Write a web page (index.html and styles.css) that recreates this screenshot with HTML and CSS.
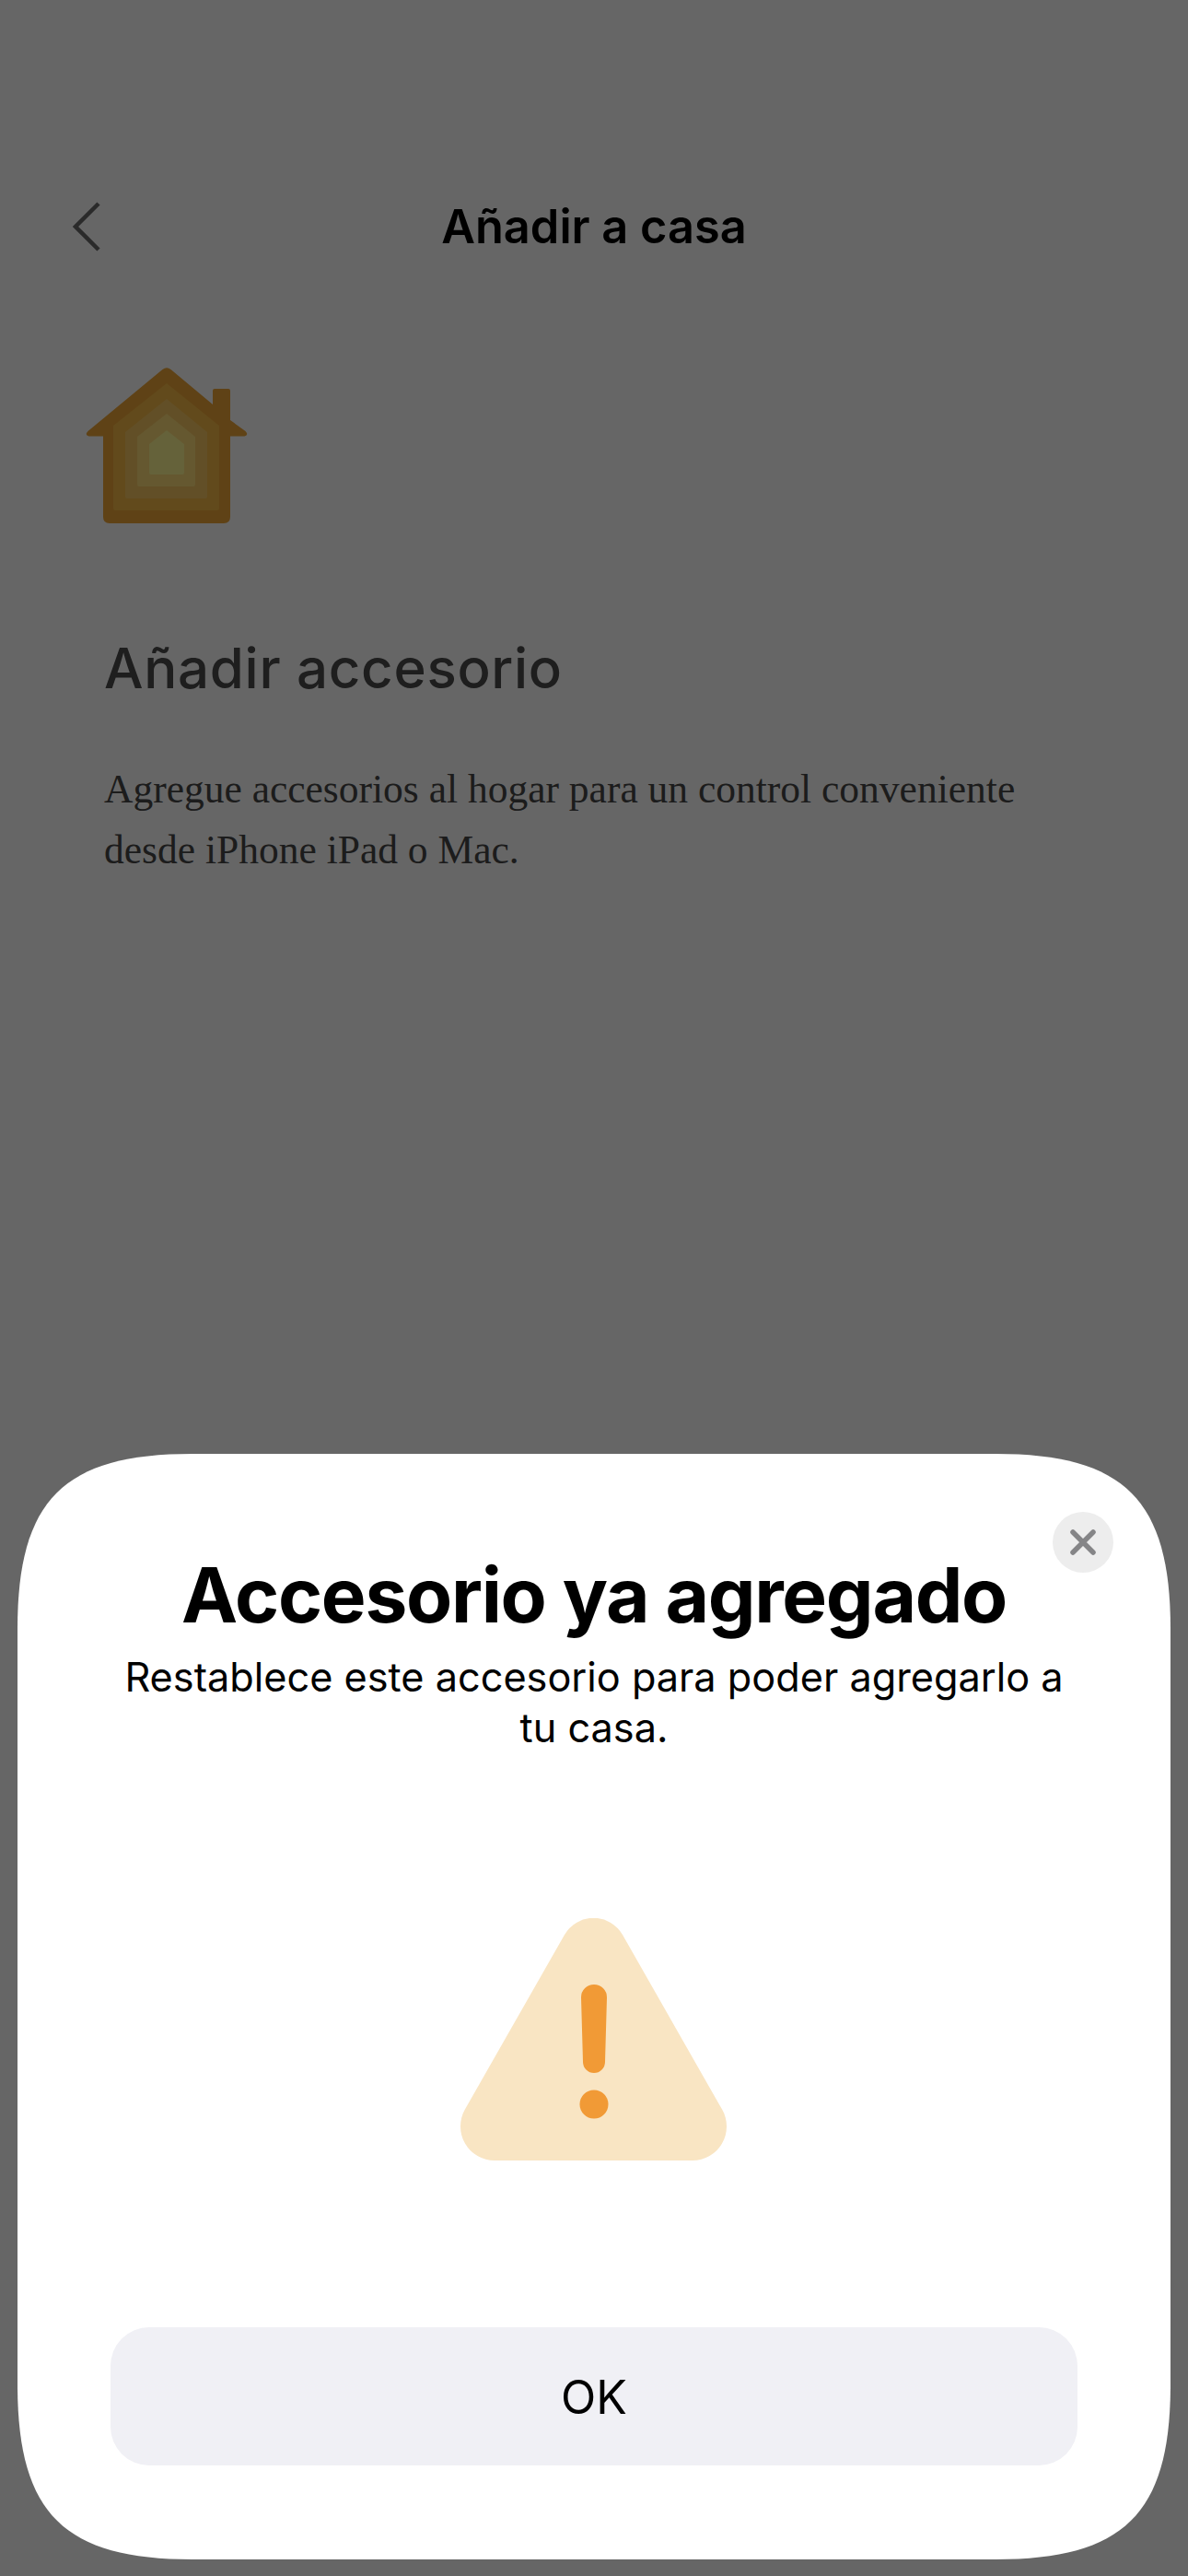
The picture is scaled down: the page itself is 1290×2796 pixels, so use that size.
FILE: index.html
```html
<!DOCTYPE html>
<html lang="es">
<head>
<meta charset="utf-8">
<title>Añadir a casa</title>
<link rel="stylesheet" href="styles.css">
</head>
<body>
<main class="page">
  <header class="nav">
    <svg class="back" width="30" height="54" viewBox="0 0 30 54" aria-hidden="true"><path d="M28 2 3 27l25 25" fill="none" stroke="#696969" stroke-width="4.5"/></svg>
    <h1 class="nav-title">Añadir a casa</h1>
  </header>
  <svg class="home" width="176" height="170" viewBox="93 399 176 170" aria-hidden="true">
    <path fill="#eda537" d="M176.500 401q4.500-3.500 9 0L231 439v-15q0-2 2-2h15q2 0 2 2v32l16.500 12q4 4-1 5.500H250V561q0 7-7 7H119q-7 0-7-7v-87.500H96.500q-5-1.500-1-5.500z"/>
    <path fill="#f5b946" d="M181 416 238 462V552q0 2-2 2H125q-2 0-2-2V462z"/>
    <path fill="#f5c662" d="M181 433 225 469V539q0 2-2 2H138q-2 0-2-2V469z"/>
    <path fill="#fcdc78" d="M181 449 212 474V526q0 2-2 2H151q-2 0-2-2V474z"/>
    <path fill="#fcf591" d="M181 467 200 482V513q0 2-2 2H164q-2 0-2-2V482z"/>
  </svg>
  <section class="intro">
    <h2 class="intro-title">Añadir accesorio</h2>
    <p class="intro-text">Agregue accesorios al hogar para un control conveniente desde iPhone iPad o Mac.</p>
  </section>
</main>
<div class="scrim"></div>
<section class="sheet">
  <button class="close" aria-label="Cerrar">
    <svg width="28" height="28" viewBox="0 0 28 28" aria-hidden="true"><path d="M3 3l22 22M25 3 3 25" fill="none" stroke="#858587" stroke-width="5.500" stroke-linecap="round"/></svg>
  </button>
  <h2 class="sheet-title">Accesorio ya agregado</h2>
  <p class="sheet-text">Restablece este accesorio para poder agregarlo a tu casa.</p>
  <svg class="warn" width="289" height="263" viewBox="0 0 289 263" aria-hidden="true">
    <path fill="#f9e5c3" d="M113 18A36.300 36.300 0 0 1 176 18L284.100 207.600A37 37 0 0 1 252 263H37A37 37 0 0 1 4.900 207.600Z"/>
    <path fill="#f19a36" d="M131 86a14 14 0 0 1 28 0l-2 70a12 12 0 0 1-24 0z"/>
    <circle fill="#f19a36" cx="145" cy="202" r="15.500"/>
  </svg>
  <button class="ok">OK</button>
</section>
</body>
</html>
```
FILE: styles.css
```css
html, body {
  margin: 0;
  height: 2796px;
  background: #fff;
  overflow: hidden;
}

.page {
  height: 2796px;
  box-sizing: border-box;
  padding-top: 219px;
  font-family: Inter, "Noto Sans", sans-serif;
}

.nav {
  position: relative;
  display: flex;
  align-items: center;
  justify-content: center;
  height: 54px;
}

.back {
  position: absolute;
  left: 79px;
  top: 0;
}

.nav-title {
  margin: 0;
  font-size: 50.500px;
  line-height: 54px;
  font-weight: 600;
  color: #000;
}

.home {
  display: block;
  margin: 126px 0 0 93px;
}

.intro {
  padding: 121px 113px 0;
}

.intro-title {
  margin: 0;
  font-size: 60px;
  line-height: 70px;
  font-weight: 550;
  letter-spacing: 0.7px;
  color: #4b4b4b;
}

.intro-text {
  margin: 63px 0 0;
  font-family: "Liberation Serif", serif;
  font-size: 43.500px;
  line-height: 66px;
  color: #464646;
}

.scrim {
  position: fixed;
  inset: 0;
  background: rgba(0, 0, 0, 0.6);
}

.sheet {
  position: absolute;
  left: 19px;
  top: 1578px;
  width: 1252px;
  height: 1200px;
  box-sizing: border-box;
  padding: 112px 99px 102px;
  display: flex;
  flex-direction: column;
  align-items: center;
  background: #fff;
  font-family: Inter, "Noto Sans", sans-serif;
  color: #000;
  clip-path: path("M0 190C0 50 50 0 190 0H1062C1202 0 1252 50 1252 190V1010C1252 1150 1202 1200 1062 1200H190C50 1200 0 1150 0 1010Z");
}

.close {
  position: absolute;
  left: 1124px;
  top: 63px;
  width: 66px;
  height: 66px;
  padding: 0;
  border: 0;
  border-radius: 50%;
  background: #ededed;
  display: flex;
  align-items: center;
  justify-content: center;
}

.sheet-title {
  margin: 0;
  font-size: 82px;
  line-height: 84px;
  font-weight: 700;
  white-space: nowrap;
  letter-spacing: -1.300px;
}

.sheet-text {
  margin: 19px 0 0;
  width: 1054px;
  font-size: 43.250px;
  line-height: 55px;
  text-align: center;
}

.warn {
  display: block;
  margin: 179px 1px 0 0;
}

.ok {
  margin-top: auto;
  width: 1050px;
  height: 150px;
  padding: 2px 0 0;
  border: 0;
  border-radius: 42px;
  background: #f0f0f5;
  font-family: inherit;
  font-size: 50px;
  color: #000;
}
```
